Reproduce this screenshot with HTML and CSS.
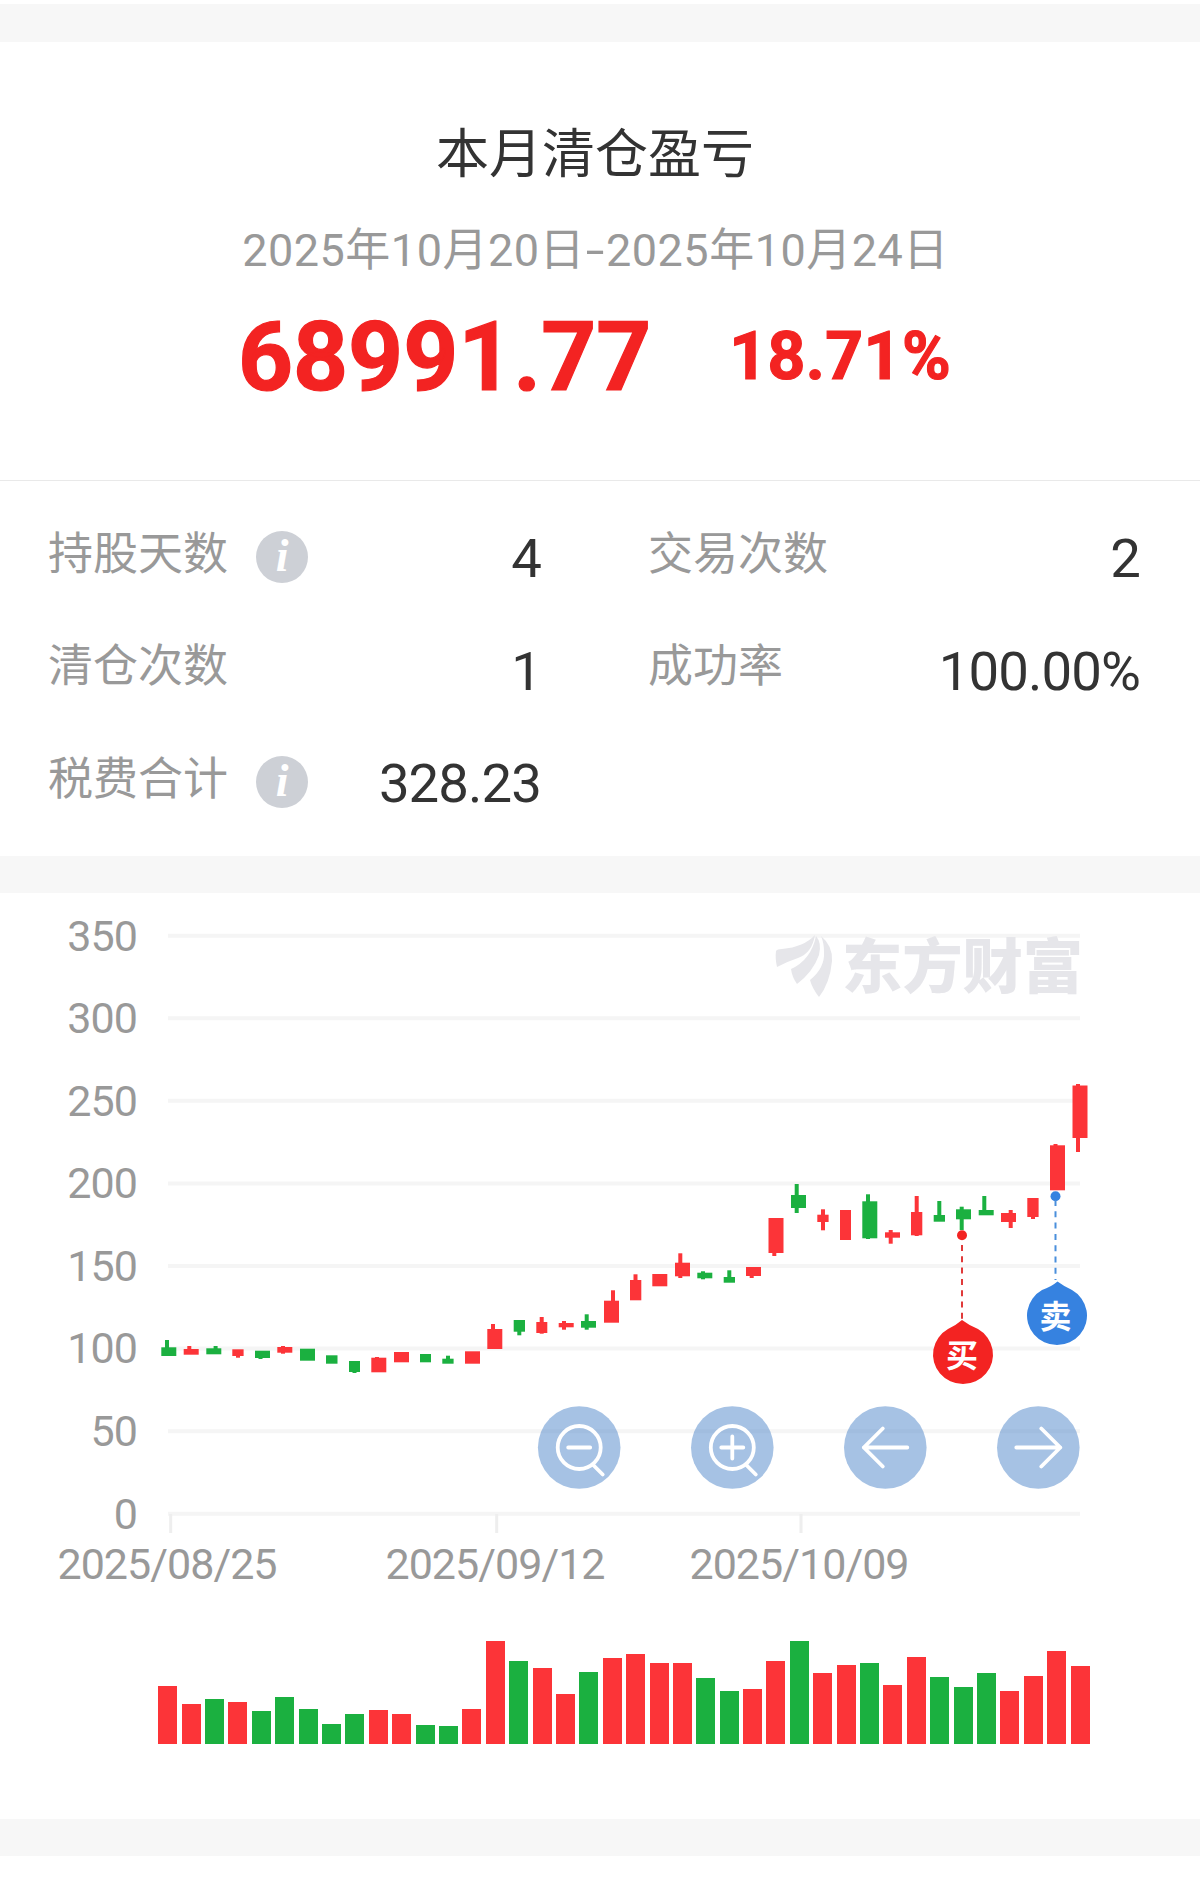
FILE: index.html
```html
<!DOCTYPE html>
<html lang="zh-CN">
<head>
    <meta charset="UTF-8">
    <meta name="viewport" content="width=device-width, initial-scale=1.0">
    <title>本月清仓盈亏</title>
    <link rel="stylesheet" href="styles.css">
</head>
<body>

<div class="band band-top"></div>

<!-- Profit summary -->
<div class="summary">
    <h1>本月清仓盈亏</h1>
    <div class="period">2025年10月20日<span class="dash">-</span>2025年10月24日</div>
    <div class="profit">
        <span class="amount">68991.77</span>
        <span class="rate">18.71%</span>
    </div>
</div>

<!-- Statistics -->
<div class="stats">
    <div class="stat">
        <span class="label">持股天数</span>
        <span class="info">i</span>
        <span class="value">4</span>
    </div>
    <div class="stat">
        <span class="label">交易次数</span>
        <span class="value">2</span>
    </div>
    <div class="stat">
        <span class="label">清仓次数</span>
        <span class="value">1</span>
    </div>
    <div class="stat">
        <span class="label">成功率</span>
        <span class="value">100.00%</span>
    </div>
    <div class="stat">
        <span class="label">税费合计</span>
        <span class="info">i</span>
        <span class="value">328.23</span>
    </div>
</div>

<div class="band"></div>

<!-- K line chart -->
<svg class="kline" width="1200" height="707" viewBox="0 893 1200 707">
    <g id="grid"></g>

    <g class="watermark">
        <path d="M776 951 Q777 949 782 949 Q804 947 815 935 Q812 953 798 958 Q786 962 777 967 Q775 958 776 951Z"/>
        <path d="M816 936 Q822 943 819 955 Q813 972 797 984 Q792 977 791 969 Q811 960 816 936Z"/>
        <path d="M821 936 Q833 946 832 961 Q830 983 819 997 Q812 988 810 980 Q825 968 824 952 Q824 943 821 936Z"/>
        <text x="842" y="988" textLength="241" lengthAdjust="spacingAndGlyphs">东方财富</text>
    </g>

    <g class="axis-x">
        <path d="M170.7 1514v19M496.7 1514v19M801 1514v19"/>
        <text x="167.5" y="1578.500" textLength="220">2025/08/25</text>
        <text x="495.5" y="1578.500" textLength="220">2025/09/12</text>
        <text x="799.5" y="1578.500" textLength="220">2025/10/09</text>
    </g>

    <g id="candles"></g>

    <!-- buy and sell marks -->
    <g class="mark buy">
        <circle cx="962" cy="1235.3" r="5"/>
        <path class="line" d="M962 1245V1320"/>
        <path d="M962 1320 Q970 1326 978 1329 A30 29.5 0 1 1 948 1329 Q955 1326 962 1320Z"/>
        <text x="962" y="1367">买</text>
    </g>
    <g class="mark sell">
        <circle cx="1055.5" cy="1196.3" r="5"/>
        <path class="line" d="M1055.5 1200V1280"/>
        <path d="M1057.5 1281.5 Q1065 1287 1072 1290 A30 29.5 0 1 1 1042 1290 Q1051 1287 1057.5 1281.5Z"/>
        <text x="1055.5" y="1328">卖</text>
    </g>

    <!-- zoom and move buttons -->
    <g class="tool" transform="translate(579.2 1447.5)">
        <circle class="disc" r="41.3"/>
        <circle r="21.5"/>
        <path d="M-11 0H11M13.5 17L23.5 27"/>
    </g>
    <g class="tool" transform="translate(732.3 1447.5)">
        <circle class="disc" r="41.3"/>
        <circle r="21.5"/>
        <path d="M-11 0H11M0 -11V11M13.5 17L23.5 27"/>
    </g>
    <g class="tool" transform="translate(885.3 1447.5)">
        <circle class="disc" r="41.3"/>
        <path d="M22 0H-21.5M-2.5 -19L-21.5 0L-2.5 19"/>
    </g>
    <g class="tool" transform="translate(1038.3 1447.5)">
        <circle class="disc" r="41.3"/>
        <path d="M-22 0H22M3 -19L22 0L3 19"/>
    </g>
</svg>

<div class="volume" id="volume"></div>

<div class="band"></div>

<script src="chart.js"></script>
</body>
</html>
```
FILE: styles.css
```css
body {
    margin: 0;
    font-family: Roboto, "Noto Sans CJK SC", sans-serif;
    background-color: #fff;
    color: #333;
}

.band {
    height: 37px;
    background-color: #f7f7f7;
}

.band-top {
    height: 38px;
    margin-top: 4px;
}

.summary {
    box-sizing: border-box;
    height: 439px;
    padding-top: 78px;
    border-bottom: 1px solid #e9e9e9;
    text-align: center;
}

h1 {
    margin: 0;
    padding-right: 10px;
    font-size: 53px;
    font-weight: 400;
    line-height: 70px;
}

.period {
    margin-top: 31px;
    padding-right: 9px;
    font-size: 45px;
    line-height: 60px;
    letter-spacing: 0.5px;
    color: #999;
}

.dash {
    display: inline-block;
    margin: 0 4px;
    transform: scaleX(1.5);
}

.profit {
    display: flex;
    justify-content: center;
    align-items: center;
    gap: 78px;
    height: 120px;
    margin-top: 16px;
    padding-right: 11px;
    color: #f32322;
    font-weight: 700;
    -webkit-text-stroke: 1.2px #f32322;
}

.amount {
    font-size: 96px;
    line-height: 120px;
}

.rate {
    font-size: 66px;
    line-height: 78px;
    letter-spacing: 0.4px;
}

.stats {
    box-sizing: border-box;
    display: grid;
    grid-template-columns: 493px 492px;
    grid-auto-rows: 112.5px;
    column-gap: 107px;
    height: 375px;
    padding: 20px 0 0 48px;
}

.stat {
    display: flex;
    align-items: center;
}

.label {
    font-size: 45px;
    line-height: 60px;
    color: #999;
    margin-top: -5px;
}

.info {
    width: 52px;
    height: 52px;
    margin-left: 28px;
    border-radius: 50%;
    background-color: #cdd0d6;
    color: #fff;
    font: italic bold 46px/50px "Liberation Serif", serif;
    text-align: center;
}

.value {
    margin-top: 2px;
    margin-left: auto;
    font-size: 54.5px;
    line-height: 60px;
    letter-spacing: -0.9px;
}

.kline {
    display: block;
}

#grid path {
    stroke: #f5f5f5;
    stroke-width: 4;
}

#grid text {
    font-size: 43px;
    fill: #999;
    text-anchor: end;
    letter-spacing: -0.9px;
}

.axis-x text {
    font-size: 43px;
    fill: #999;
    text-anchor: middle;
}

.axis-x path {
    stroke: #eee;
    stroke-width: 3;
}

.watermark {
    fill: #e6e6ea;
    font-family: "Noto Sans CJK SC", sans-serif;
    font-size: 59px;
    font-weight: 900;
}

.red {
    fill: #fc3438;
    background-color: #fc3438;
}

.green {
    fill: #1bb040;
    background-color: #1bb040;
}

.mark text {
    fill: #fff;
    font-family: "Noto Sans CJK SC", sans-serif;
    font-size: 32px;
    font-weight: 700;
    text-anchor: middle;
}

.mark .line {
    stroke-width: 2;
    stroke-dasharray: 6 5.3;
}

.buy {
    fill: #f32322;
}

.buy .line {
    stroke: #e03a3a;
}

.sell {
    fill: #3682e0;
}

.sell .line {
    stroke: #4a8fdc;
}

.tool {
    fill: none;
    stroke: #fff;
    stroke-width: 3.8;
    stroke-linecap: round;
    stroke-linejoin: round;
}

.tool .disc {
    fill: rgba(60, 122, 196, 0.46);
    stroke: none;
}

.volume {
    display: flex;
    justify-content: space-between;
    align-items: flex-end;
    height: 144px;
    margin: 0 110.4px 75px 158.3px;
}

.volume div {
    width: 19px;
}
```
FILE: chart.js
```javascript
var SVG = 'http://www.w3.org/2000/svg';

function add(parent, name, attrs, text) {
    var el = document.createElementNS(SVG, name);
    for (var key in attrs) {
        el.setAttribute(key, attrs[key]);
    }
    if (text !== undefined) {
        el.textContent = text;
    }
    parent.appendChild(el);
}

// Horizontal lines and their values
var grid = document.getElementById('grid');
for (var i = 0; i <= 7; i++) {
    var y = 1513.7 - i * 82.57;
    add(grid, 'path', { d: 'M168 ' + y + 'H1080' });
    add(grid, 'text', { x: 137, y: y + 14.8 }, i * 50);
}

// colour, left, width, top, bottom, high, low, wick centre
var candles = [
    ['g', 161.3, 15, 1347.3, 1356, 1340, 1356, 167],
    ['r', 183.7, 15, 1349, 1354.7, 1346, 1354, 189.3],
    ['g', 206.3, 15, 1348.3, 1354.3, 1346, 1354, 215.6],
    ['r', 232.3, 11.3, 1349.3, 1356, 1350, 1357.7, 238],
    ['g', 255, 15, 1350.7, 1358, 1351, 1359, 260.5],
    ['r', 277.3, 15, 1347, 1352.7, 1346, 1353.7, 283],
    ['g', 300, 15, 1348.7, 1360.7, 1349, 1360, 306],
    ['g', 326, 11.5, 1355.3, 1363.7, 1356, 1363, 332],
    ['g', 349, 11, 1361, 1372, 1362, 1373, 354.5],
    ['r', 371.3, 15, 1357.7, 1372.3, 1357, 1372, 377],
    ['r', 394, 15, 1352, 1362.3, 1352, 1362, 400],
    ['g', 420, 11, 1354, 1362.3, 1354, 1362, 425],
    ['g', 442.3, 11.3, 1358.7, 1363.7, 1355.7, 1363, 448],
    ['r', 465, 15, 1351.3, 1363.7, 1352, 1363, 471],
    ['r', 487.3, 15, 1329, 1349, 1324, 1349, 493],
    ['g', 513.7, 11.3, 1320, 1331.7, 1320, 1335.3, 519.3],
    ['r', 536.3, 11, 1322, 1333, 1317, 1333.7, 541.7],
    ['r', 558.7, 15, 1323, 1327.3, 1321, 1329.7, 564],
    ['g', 581, 15, 1321, 1327.7, 1314.3, 1329.7, 586.7],
    ['r', 604, 15, 1300.7, 1322.7, 1290.3, 1322, 613],
    ['r', 630, 11.3, 1280, 1300.3, 1274.3, 1300, 635.5],
    ['r', 652.3, 15, 1274, 1286.3, 1274, 1286, 658],
    ['r', 675, 15, 1262.7, 1276.3, 1253.3, 1278, 680.3],
    ['g', 697.3, 15, 1272.7, 1278.3, 1271.3, 1279.3, 703],
    ['g', 723.7, 11.3, 1277, 1282.7, 1270.3, 1282, 729.3],
    ['r', 746, 15, 1267, 1276, 1267, 1278, 751.7],
    ['r', 768.5, 15, 1218, 1253, 1218, 1256, 774.3],
    ['g', 791, 15, 1195, 1208, 1184, 1213, 796.7],
    ['r', 817.3, 11.3, 1214.7, 1222, 1209.3, 1230.3, 823],
    ['r', 840, 11, 1210, 1240, 1210, 1240, 845.5],
    ['g', 862.3, 15, 1201.3, 1238.3, 1194.3, 1239, 868],
    ['r', 885, 15, 1232.3, 1237.7, 1230, 1243.7, 890.7],
    ['r', 911, 11.3, 1212, 1235.3, 1196, 1236, 916.7],
    ['g', 933.7, 11.3, 1215, 1221.7, 1201, 1221, 939.3],
    ['g', 956, 15, 1209.3, 1219.3, 1206.7, 1230, 961.7],
    ['g', 978.7, 15, 1210, 1215.3, 1196, 1215, 984.3],
    ['r', 1001, 15, 1213, 1222, 1210, 1228, 1010.7],
    ['r', 1027.3, 11.3, 1198, 1217, 1198, 1219, 1033],
    ['r', 1050, 15, 1145.3, 1190.3, 1144, 1190, 1055.5],
    ['r', 1072.5, 15, 1085.5, 1138, 1084, 1152, 1078]
];

var colors = { r: 'red', g: 'green' };
var chart = document.getElementById('candles');
candles.forEach(function (c) {
    var color = colors[c[0]];
    add(chart, 'rect', { class: color, x: c[7] - 2, y: c[5], width: 4, height: c[6] - c[5] });
    add(chart, 'rect', { class: color, x: c[1], y: c[3], width: c[2], height: c[4] - c[3] });
});

// Volume bars
var volumeColors = 'rrgrgggggrrggrrgrrgrrrrggrrgrrgrrgggrrrr';
var volumes = [
    58, 40.3, 45, 42.3, 33, 46.7, 35, 19.7, 30, 33.7, 30.3, 19, 18, 35,
    102.7, 83, 76, 50, 72, 86, 90, 81, 81, 66, 52.7, 55.3, 82.7, 103.3,
    70.7, 79.3, 81, 59, 87, 66.7, 57, 71.3, 53, 68, 93, 77.7
];
var volume = document.getElementById('volume');
volumes.forEach(function (value, i) {
    var bar = document.createElement('div');
    bar.className = colors[volumeColors[i]];
    bar.style.height = value + 'px';
    volume.appendChild(bar);
});
```
